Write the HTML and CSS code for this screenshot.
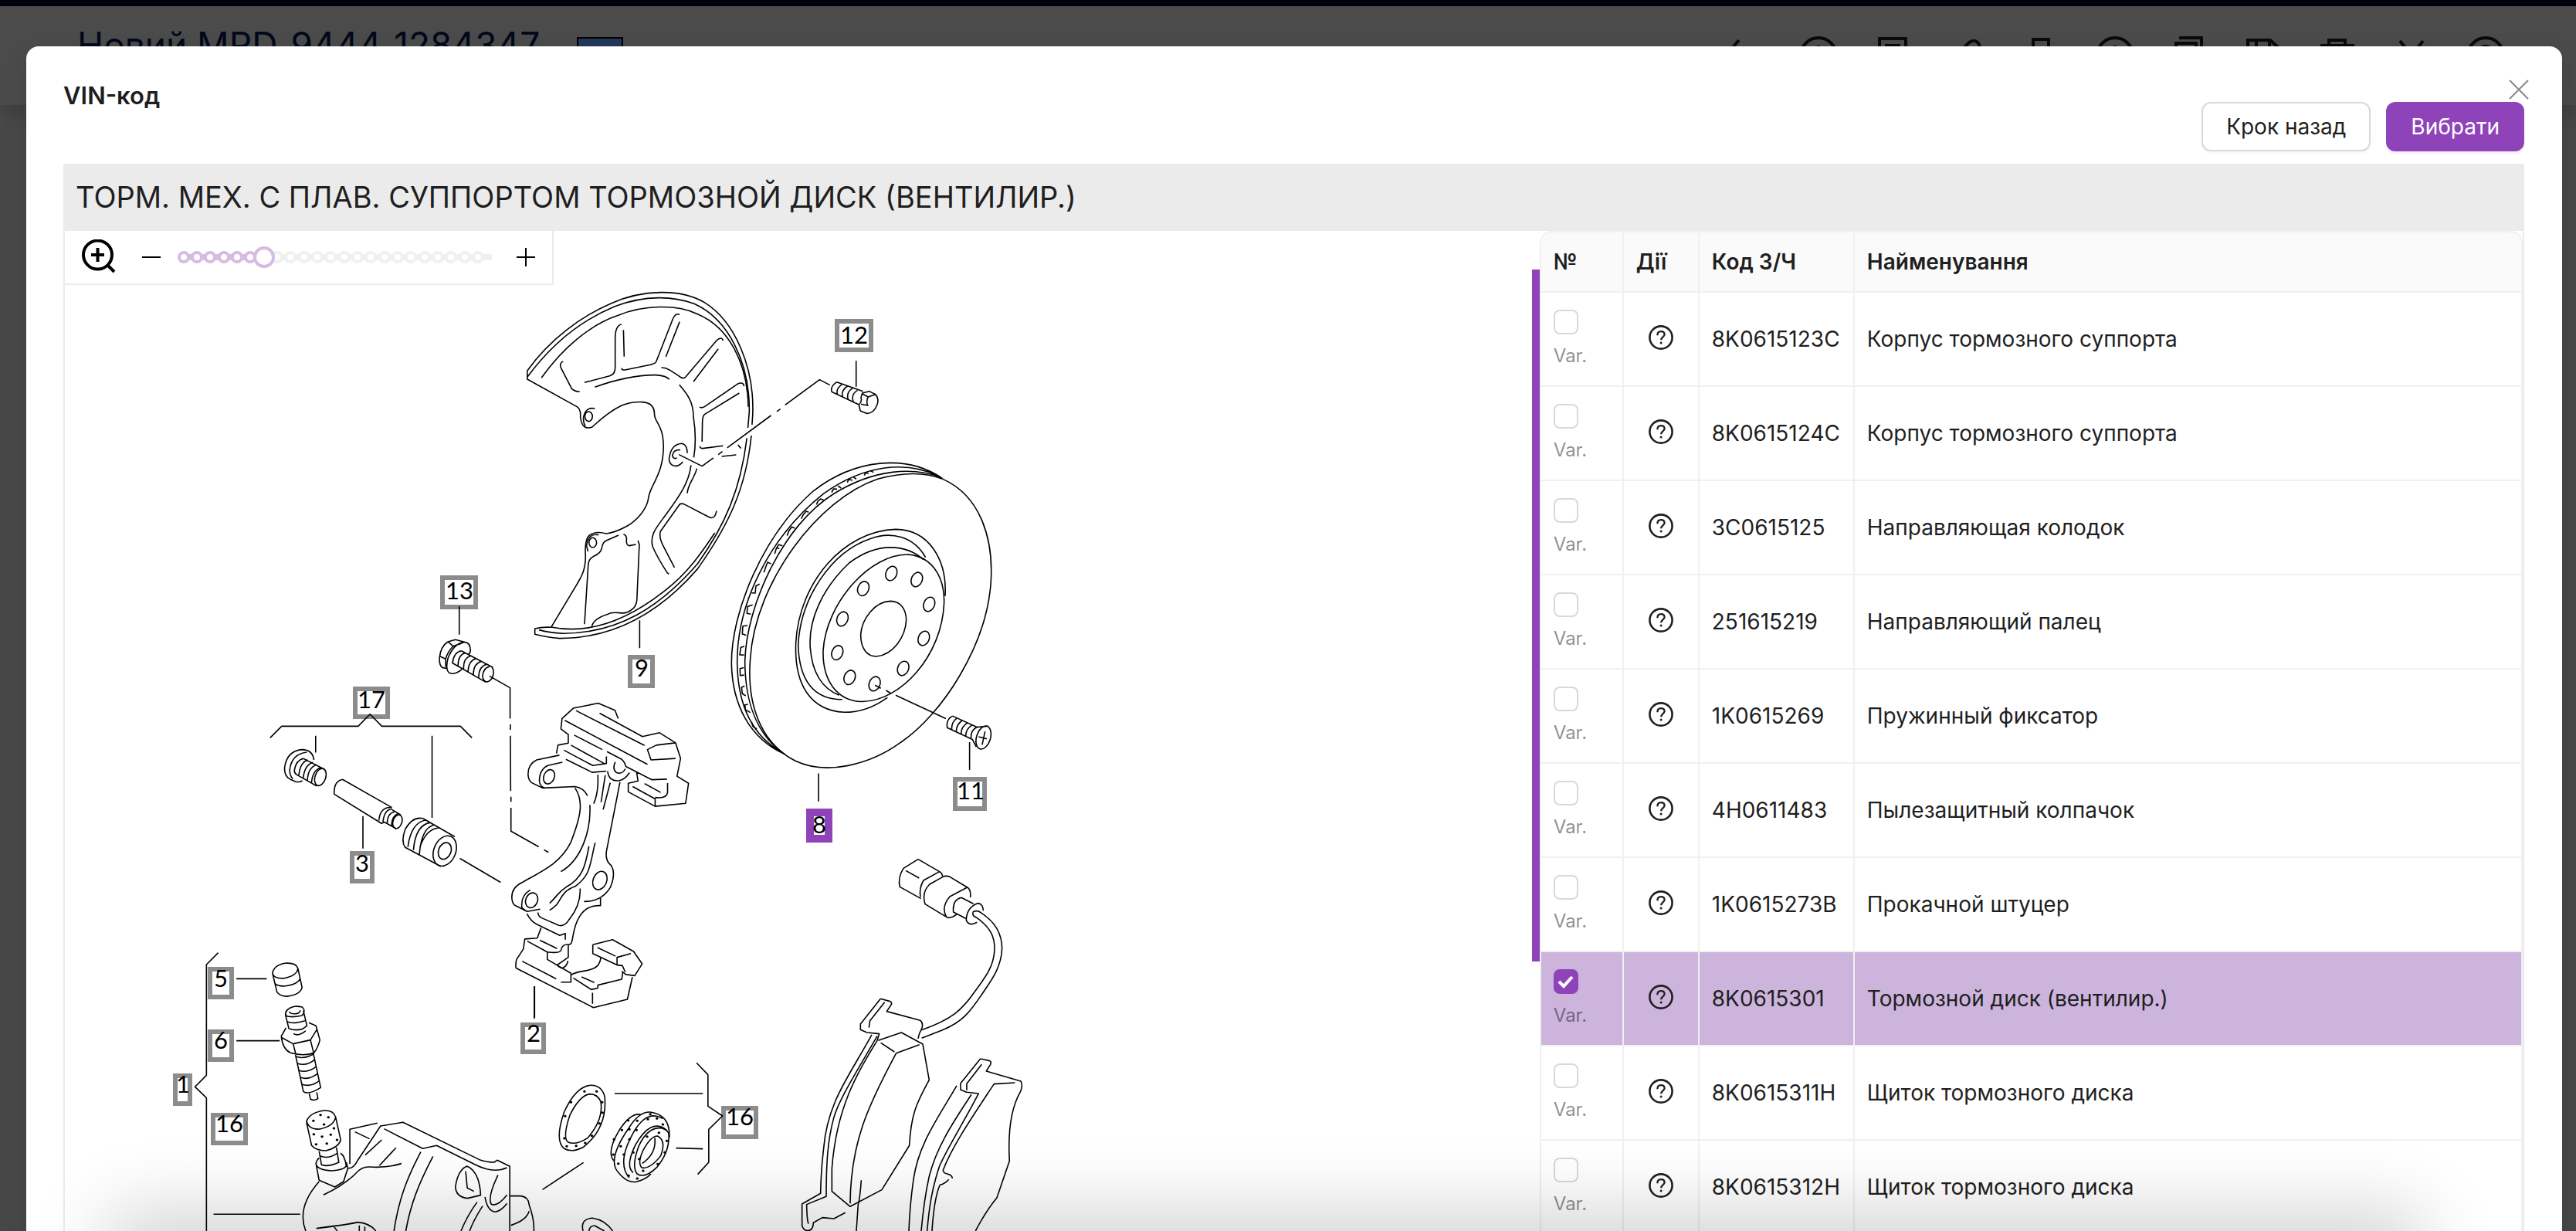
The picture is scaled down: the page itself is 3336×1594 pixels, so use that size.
FILE: index.html
```html
<!DOCTYPE html>
<html lang="uk">
<head>
<meta charset="utf-8">
<title>VIN-код</title>
<link rel="stylesheet" href="styles.css">
</head>
<body>
<svg class="defs" aria-hidden="true">
  <symbol id="help" viewBox="0 0 32 32"><circle cx="16" cy="16" r="14.6" fill="none" stroke="currentColor" stroke-width="2.6"/><path d="M11.4 13.2C11.4 9.600 13.400 8.200 16 8.200C18.800 8.200 20.600 9.900 20.600 12.200C20.600 15 16.200 15.300 16.200 19.200" fill="none" stroke="currentColor" stroke-width="2.300"/><circle cx="16.100" cy="23" r="1.500" fill="currentColor"/></symbol>
</svg>
<div class="app">
  <div class="topbar"></div>
  <header class="page-head">
    <h1 class="page-title">Новий MRD_9444_1284347</h1>
    <span class="flag"></span>
    <div class="tools">
      <svg viewBox="0 0 56 56"><path d="M21 8L4 28L21 48"/></svg>
      <svg viewBox="0 0 56 56"><circle cx="28" cy="28" r="23"/><path d="M28 15V41"/></svg>
      <svg viewBox="0 0 56 56"><path d="M11 6H45V50H11ZM18 15H38"/></svg>
      <svg viewBox="0 0 56 56"><path d="M22 20L31 11Q38 6 43 12Q48 20 40 27L26 41"/></svg>
      <svg viewBox="0 0 56 56"><path d="M18 7H38V49H18Z"/></svg>
      <svg viewBox="0 0 56 56"><circle cx="28" cy="28" r="23"/><path d="M28 15V30L36 36"/></svg>
      <svg viewBox="0 0 56 56"><path d="M15 5H44V44M11 12H37V50H11Z"/></svg>
      <svg viewBox="0 0 56 56"><path d="M8 8H37L49 19V48H8ZM19 8V20H36V8"/></svg>
      <svg viewBox="0 0 56 56"><path d="M17 16V8H38V16M8 15H48V46H8Z"/></svg>
      <svg viewBox="0 0 56 56"><path d="M13 9L43 47M43 9L13 47"/></svg>
      <svg viewBox="0 0 56 56"><circle cx="28" cy="28" r="23"/><path d="M20 22Q22 16 28 16Q34 16 35 22Q35 27 28 30V35"/></svg>
    </div>
  </header>
  <div class="page-body"></div>
</div>

<div class="mask">
  <section class="modal" role="dialog" aria-labelledby="dlg-title">
    <h2 class="modal-title" id="dlg-title">VIN-код</h2>
    <button class="close" type="button" aria-label="Закрити"><svg viewBox="0 0 24 24"><path d="M1 1L23 23M23 1L1 23"/></svg></button>
    <div class="actions">
      <button class="btn" type="button">Крок назад</button>
      <button class="btn btn-primary" type="button">Вибрати</button>
    </div>
    <h3 class="group-title">ТОРМ. МЕХ. С ПЛАВ. СУППОРТОМ ТОРМОЗНОЙ ДИСК (ВЕНТИЛИР.)</h3>
    <div class="panes">
      <div class="pane-left">
        <div class="zoombar">
          <svg class="zoom-icon" viewBox="0 0 46 46"><circle cx="20.500" cy="20" r="18.500"/><path d="M12 20H29M20.500 11V29M33 33L42 42"/></svg>
          <svg class="sign" viewBox="0 0 24 24"><path d="M0 12H24"/></svg>
          <div class="slider">
            <svg viewBox="0 0 410 32" id="dots">
              <path class="rail" d="M10 16H410"/><path class="rail-on" d="M10 16H116"/>
              <g class="dots-off"><circle cx="132" cy="16" r="6"/><circle cx="149" cy="16" r="6"/><circle cx="167" cy="16" r="6"/><circle cx="184" cy="16" r="6"/><circle cx="201" cy="16" r="6"/><circle cx="219" cy="16" r="6"/><circle cx="236" cy="16" r="6"/><circle cx="253" cy="16" r="6"/><circle cx="271" cy="16" r="6"/><circle cx="288" cy="16" r="6"/><circle cx="305" cy="16" r="6"/><circle cx="323" cy="16" r="6"/><circle cx="340" cy="16" r="6"/><circle cx="357" cy="16" r="6"/><circle cx="375" cy="16" r="6"/><circle cx="392" cy="16" r="6"/></g>
              <g class="dots-on"><circle cx="11" cy="16" r="6"/><circle cx="28" cy="16" r="6"/><circle cx="45" cy="16" r="6"/><circle cx="63" cy="16" r="6"/><circle cx="80" cy="16" r="6"/><circle cx="97" cy="16" r="6"/></g>
            </svg>
            <input type="range" min="0" max="22" value="6" aria-label="Масштаб">
          </div>
          <svg class="sign" viewBox="0 0 24 24"><path d="M0 12H24M12 0V24"/></svg>
        </div>
        <svg class="scheme" viewBox="84 299 1900 1295" role="img" aria-label="Схема тормозного механизма">
          <g class="spots">
            <rect x="1084" y="416" width="44" height="37"/><rect x="1237" y="1009" width="38" height="38"/><rect x="573" y="748" width="43" height="38"/><rect x="460" y="892" width="42" height="36"/><rect x="816" y="851" width="29" height="37"/><rect x="456" y="1105" width="26" height="36"/><rect x="272" y="1255" width="28" height="36"/><rect x="272" y="1336" width="28" height="36"/><rect x="227" y="1393" width="19" height="36"/><rect x="276" y="1444" width="42" height="36"/><rect x="677" y="1327" width="27" height="35"/><rect x="937" y="1435" width="42" height="37"/>
            <rect class="spot-on" x="1049" y="1052" width="24" height="34"/>
          </g>
          <g class="nums">
            <text x="1106" y="445">12</text><text x="1257" y="1035">11</text><text x="595" y="776">13</text><text x="481" y="917">17</text><text x="831" y="876">9</text><text x="469" y="1129">3</text><text x="286" y="1278">5</text><text x="286" y="1358">6</text><text x="237" y="1415">1</text><text x="297" y="1466">16</text><text x="691" y="1349">2</text><text x="958" y="1457">16</text><text x="1061" y="1079">8</text>
          </g>
          <!-- 9: dust shield, 12: bolt -->
          <g class="ln" transform="translate(640 360) scale(.4464 .3333)">
            <path d="M96 360C160 240 250 150 340 98C430 45 540 40 610 95C700 170 755 350 750 530L748 570M746 612C730 820 680 960 590 1130C480 1300 350 1400 190 1400Q150 1396 118 1384V1362Q140 1355 165 1357L240 1190C250 1165 265 1140 265 1080Q262 1030 272 1005Q290 980 325 993Q350 990 385 964C410 945 445 900 448 850C455 800 492 760 491 650C490 570 465 560 465 530Q465 485 430 482Q400 480 370 495C330 520 300 560 285 578Q255 595 250 540Q252 510 240 500L96 393V360"/>
            <path d="M96 385C170 250 260 160 350 110C440 65 520 70 580 100C680 160 742 330 740 520L736 582M733 622C715 820 670 960 590 1110C480 1280 360 1380 200 1381Q160 1378 130 1367"/>
            <path d="M137 388C200 270 280 180 360 145C430 105 530 100 590 140C680 190 735 330 737 500M165 1356C260 1382 370 1345 490 1220C560 1150 600 1070 640 990"/>
            <path d="M200 324Q188 330 194 350L225 430Q235 442 248 441M262 406L335 380Q350 375 351 350V230Q352 185 369 180M375 202L377 305M538 142Q525 135 518 160L470 325Q465 335 445 339L380 357Q368 358 371 350M538 170L498 306M664 243Q660 225 645 243L555 385Q548 395 535 380L510 358Q498 348 485 348M650 275L578 403M725 420Q722 403 708 410L610 500Q600 507 596 500M711 447L610 530Q604 538 604 560L603 636M292 424C350 395 420 375 470 377Q500 380 508 394M537 415C560 450 578 480 578 540C585 600 585 650 579 697M664 652L605 662Q597 662 597 653M707 648L716 662M702 687L660 693M571 727C565 800 530 860 495 925C470 970 450 1000 460 1045Q475 1090 502 1145L507 1150M588 740C580 780 562 800 560 836M523 1125L490 1040Q478 1010 482 985L535 885Q540 873 550 878L625 930Q640 938 645 905"/>
            <ellipse cx="274" cy="538" rx="11" ry="19"/><path d="M292 507Q265 500 259 540Q258 565 265 575"/>
            <ellipse cx="286" cy="1028" rx="11" ry="19"/><path d="M303 998Q272 990 268 1040L272 1062"/>
            <path d="M361 999L325 1020Q315 1025 312 1050Q308 1070 290 1080Q275 1090 273 1110L262 1345M375 995Q385 1000 384 1015Q382 1038 392 1040L411 1035M417 1020L421 1035L414 1250Q412 1275 402 1285Q385 1305 365 1301Q340 1297 330 1306Q285 1325 283 1357"/>
            <path d="M547 714Q535 735 520 729Q503 720 509 690Q516 645 545 643Q560 648 560 680M540 668Q520 665 517 690Q520 705 530 699M536 686L603 731L636 699M650 686L662 674M676 660L803 534M820 519L830 509M844 493L944 395L974 416"/>
            <path d="M994 404Q975 420 979 442M994 404L1070 440M979 442L1058 492M1010 412Q990 430 996 453M1025 420Q1005 438 1011 462M1040 428Q1020 445 1027 472M1054 436Q1034 452 1042 481M1068 447L1088 440L1106 452Q1118 470 1110 495Q1100 528 1080 526L1062 516L1058 492Q1068 480 1064 465ZM1068 450L1085 462L1106 452M1085 462Q1078 480 1084 495L1064 490"/>
            <path class="lead" d="M1050 322V422M422 1330V1438"/>
          </g>
          <!-- 8: disc, 11: screw -->
          <g class="ln" transform="translate(920 560) scale(.3333 .3444)">
            <path d="M905 176C1050 240 1100 400 1090 560C1075 800 900 1060 740 1165C620 1250 450 1290 330 1235C200 1170 140 1030 155 850C175 560 420 250 650 175Q800 135 905 176"/>
            <path d="M900 172C760 80 560 100 400 220C200 390 80 680 82 870C85 1020 150 1150 290 1210M890 165C760 105 600 120 440 230C220 400 105 650 104 860C105 1020 160 1140 280 1203M895 168C790 130 640 135 480 230C280 350 140 650 134 860C135 1020 180 1130 275 1200"/>
            <path d="M598 162L602 152L615 153M622 144L634 150M532 188L537 176L552 180M556 168L567 175M471 225L479 212L492 213M496 201L508 209M412 271L418 258L428 250L440 254M353 324L361 309L372 296L382 300M298 388L305 370L316 355L328 360M250 456L256 436L265 422L280 426M258 434L268 437M208 526L214 508L222 488L236 494M160 603L174 604L177 577L191 570M157 683L142 680L144 655L164 648M139 762L124 758L126 728L144 726M131 837L114 836L118 808L132 804M131 912L116 914L115 888L130 884M137 990L124 982L121 958L133 953M155 1053L136 1042L134 1024L146 1022M180 1115L165 1105L160 1088"/>
            <path d="M912 615C920 480 850 365 720 364C520 370 345 560 332 790C325 950 390 1045 520 1052Q610 1052 688 996M836 470C790 390 700 370 620 400C470 450 350 620 341 800C345 930 400 1005 512 1004M828 478C760 420 650 410 540 490C430 590 380 710 388 810C395 900 430 960 500 988"/>
            <path d="M770 459C620 455 450 640 438 820C435 930 490 1010 590 1012C740 1010 900 840 908 640C910 530 850 465 770 459Z"/>
            <path d="M700 634C640 635 588 700 584 760C584 815 610 842 645 842C710 835 758 770 761 705C760 660 735 634 700 634Z"/>
            <g class="holes"><ellipse cx="703" cy="530" rx="21" ry="28" transform="rotate(25 703 530)"/><ellipse cx="802" cy="553" rx="21" ry="28" transform="rotate(25 802 553)"/><ellipse cx="850" cy="646" rx="21" ry="28" transform="rotate(25 850 646)"/><ellipse cx="829" cy="774" rx="21" ry="28" transform="rotate(25 829 774)"/><ellipse cx="749" cy="887" rx="21" ry="28" transform="rotate(25 749 887)"/><ellipse cx="638" cy="945" rx="21" ry="28" transform="rotate(25 638 945)"/><ellipse cx="541" cy="921" rx="21" ry="28" transform="rotate(25 541 921)"/><ellipse cx="493" cy="828" rx="21" ry="28" transform="rotate(25 493 828)"/><ellipse cx="513" cy="701" rx="21" ry="28" transform="rotate(25 513 701)"/><ellipse cx="594" cy="587" rx="21" ry="28" transform="rotate(25 594 587)"/></g>
            <path d="M640 950L662 962M682 970L700 980M720 988L915 1076"/>
            <path d="M941 1066Q915 1078 920 1110L1018 1154L1033 1182M941 1066L1035 1108L1080 1104M958 1074Q935 1090 938 1118M978 1083Q953 1100 956 1127M998 1092Q971 1110 975 1135M1016 1100Q989 1118 993 1144M1036 1108Q1010 1120 1013 1150"/><ellipse cx="1061" cy="1147" rx="27" ry="45" transform="rotate(18 1061 1147)"/><path d="M1042 1144L1074 1152M1067 1124L1056 1174"/>
            <path class="lead" d="M420 1282V1387M1007 1164V1269"/>
          </g>
          <!-- 2: bracket, 3 and 17: guide pin set, 13: bolt -->
          <g class="ln" transform="translate(320 720) scale(.38265)">
            <path d="M718 170V266M705 283L680 290Q655 305 651 345Q650 372 662 378L675 380M705 283L735 291L715 300M680 290L697 305L712 300M697 305Q678 325 672 348L652 339M672 348V375M735 291Q756 292 756 320Q755 330 748 334M735 291Q700 295 680 345Q668 395 692 398Q710 398 727 383"/>
            <path d="M725 321Q700 325 695 362L808 427M725 321L832 377M738 328Q713 335 714 373M757 338Q730 345 733 385M775 347Q748 355 748 393M793 356Q765 365 766 402M811 366Q783 375 784 411M820 374Q800 378 797 405Q798 425 813 426Q832 420 834 395Q834 380 828 377M820 406L890 446V550M891 570V588M891 608L892 795M893 815V832M893 852V931L987 984M1005 994L1020 1003"/>
            <path class="lead" d="M78 615L117 576H376L416 535L456 576H722L761 615M232 608V665M626 608V886M392 880V990M973 1456V1562"/>
            <path d="M226 690Q222 655 185 655Q135 660 127 715Q125 745 145 755L165 764Q180 766 187 760M202 664Q150 670 144 725Q145 745 155 754M190 685Q165 692 160 725Q160 735 168 740L235 778M190 685L262 722M205 690Q178 700 175 745M222 698Q193 710 190 753M236 706Q205 715 204 762M250 716Q220 725 218 770"/><ellipse cx="248" cy="748" rx="18" ry="30" transform="rotate(18 248 748)"/>
            <path d="M323 756Q292 762 295 806L455 905L466 900M323 756L490 851M490 851Q450 848 446 895M490 856Q465 858 460 898L504 922M490 858L520 876M498 866Q475 870 474 905M510 872Q490 880 489 912"/><ellipse cx="509" cy="899" rx="15" ry="24" transform="rotate(18 509 899)"/>
            <path d="M595 888Q560 880 535 925Q520 965 535 986L655 1050M595 888L703 950M607 893Q555 900 544 985M620 902Q570 910 563 995M632 910Q590 920 583 1010M648 920Q605 925 585 985"/><ellipse cx="669" cy="998" rx="37" ry="53" transform="rotate(22 669 998)"/><ellipse cx="669" cy="998" rx="21" ry="29" transform="rotate(22 669 998)"/><path d="M720 1023L858 1104"/>
            <path d="M1256 550L1245 522L1188 498L1104 515L1066 550L1062 585L1087 604V633L1052 640L1047 668M1188 498M1193 532L1338 611L1396 598L1450 632L1467 685L1455 745L1494 769L1484 837L1381 847L1290 798V769L1323 761L1318 730M1113 523L1345 641M1075 556L1355 705M1107 606L1202 655M1096 640L1212 704M1072 657L1170 709L1216 702V678M1218 662L1268 688Q1277 695 1282 712L1370 757L1421 755M1338 611M1450 632L1385 640L1355 655L1367 690L1450 685M1079 688L1168 732L1216 728M1381 847V822L1305 780M1381 817Q1420 822 1423 800V768M1345 770L1400 800"/>
            <path d="M1057 674L980 690Q950 705 951 740Q952 760 965 768L1000 785L1110 780Q1140 785 1152 811M1067 698L1020 708Q990 720 989 760Q990 778 1005 784M1110 785C1140 830 1130 880 1095 970C1060 1040 1000 1065 930 1105Q890 1125 897 1165Q900 1180 910 1184L948 1203L992 1195"/><ellipse cx="1022" cy="747" rx="18" ry="25" transform="rotate(22 1022 747)"/><ellipse cx="963" cy="1165" rx="20" ry="26" transform="rotate(22 963 1165)"/><ellipse cx="1194" cy="1098" rx="23" ry="32" transform="rotate(22 1194 1098)"/>
            <path d="M958 1130Q925 1150 930 1190L942 1200M1160 842C1165 930 1130 1030 1062 1068M1187 740Q1190 800 1173 838M1212 742L1198 833M1229 767L1205 858M1262 765L1216 1000Q1212 1030 1230 1045Q1250 1070 1230 1120Q1200 1170 1140 1169M1220 728Q1225 765 1260 760Q1280 755 1294 733M1246 697Q1235 720 1250 733Q1270 740 1280 720M1178 970C1160 1040 1165 1080 1110 1118C1050 1140 1070 1175 1024 1198M1157 982C1145 1050 1135 1090 1080 1120C1050 1140 1055 1145 1024 1175M1127 1125Q1130 1180 1090 1230Q1075 1255 1055 1250L1000 1226Q985 1220 984 1206M1196 1158V1183Q1150 1180 1125 1220C1100 1260 1105 1300 1096 1312L1087 1316V1358L1048 1385M947 1210Q960 1235 980 1246L1058 1284L1077 1277V1298M995 1258L982 1293L940 1296L935 1330L912 1365Q908 1380 910 1394L1172 1528L1287 1500L1304 1425M948 1303L1016 1340Q1055 1345 1062 1335Q1065 1315 1085 1314M1016 1340V1365L1096 1412V1442H1062M991 1300L1049 1328M931 1371L1046 1431M1052 1388L1065 1395Q1082 1390 1086 1370M1096 1418C1130 1395 1190 1415 1197 1360M1104 1428L1165 1467L1187 1462V1452L1268 1432L1272 1406M1169 1478V1515M1132 1424L1175 1443M1170 1315L1237 1298L1308 1338L1337 1380L1312 1420L1282 1416L1268 1405M1170 1315V1345L1252 1384L1270 1386L1280 1408M1252 1384V1358L1299 1345M1186 1325L1247 1354"/>
            <path d="M128 1378Q90 1385 86 1412Q90 1430 125 1429Q170 1420 172 1395Q165 1375 128 1378ZM86 1412L101 1475Q110 1490 135 1490Q180 1485 186 1460L172 1395M94 1447Q105 1457 130 1455Q170 1450 180 1430"/>
          </g>
          <!-- 1, 5, 6, 16: bleeder, caliper body, seals -->
          <g class="ln" transform="translate(200 1200) scale(.5102 .3333)">
            <path class="lead" d="M162 101L132 147V577L103 622L132 665V1182M208 202H285M208 443H318M964 231V357M1376 529L1405 575V697L1442 735L1407 787V915L1379 962M1168 648H1392M1324 860L1392 863M150 1117H370"/>
            <path d="M355 310Q330 320 333 345Q345 355 375 345Q385 325 375 312Q365 308 355 310M333 345L341 395Q355 405 375 398L387 385L378 325M342 330Q345 340 360 338Q370 335 370 325M336 368Q350 380 382 365M392 373L410 385L420 440Q415 470 405 490Q380 505 345 490Q325 475 322 425L334 393M412 400L396 440L352 455L322 430M396 440L404 490M352 455L359 496M353 415Q365 428 384 405M358 498L378 640Q390 655 422 625L403 490M360 505Q380 515 403 495M362 530Q385 545 408 515M366 558Q390 570 411 543M370 585Q392 598 415 570M374 612Q395 625 419 598M393 648L396 670Q405 678 415 668L412 643"/>
            <path d="M430 714Q395 722 386 755Q392 790 420 786Q455 775 460 740Q455 712 430 714ZM386 760L399 850Q410 870 435 870Q465 860 473 830L460 740M418 872L424 925Q440 935 468 915L462 858M420 890Q440 905 464 880M472 880Q483 888 487 930Q480 945 450 948Q412 945 410 920Q412 905 418 898M410 920L418 985L458 1011L480 990L491 938L487 915"/>
            <path d="M496 922V787L566 763M509 797L546 824M491 938Q505 940 515 910L574 774L631 760L825 905Q845 915 862 915L870 907L902 931V1182M583 785L681 862L716 850L815 925Q860 960 895 936M429 1042Q480 1005 510 960Q525 932 545 933Q590 938 627 920M577 828L535 887M613 859L571 928M676 875C640 980 620 1060 608 1182M707 892C670 1000 650 1080 638 1182M418 990Q360 1090 384 1182M411 1172Q500 1155 515 1148Q545 1150 562 1182M456 1166L464 1182M520 1160V1182M534 1165V1182"/>
            <path d="M793 930Q770 945 764 1010Q765 1050 795 1055L828 1043Q825 950 793 930ZM790 950L794 1015L811 1028M872 965Q845 1050 855 1078Q870 1090 895 1042M839 1050Q845 1105 865 1108Q880 1105 895 1075M819 1070Q795 1120 778 1182M833 1085Q810 1140 800 1182M902 1046H930Q950 1050 951 1080Q965 1140 963 1182M951 1105Q945 1140 905 1160M985 1021L1089 916"/>
            <path d="M1088 1182Q1080 1135 1112 1132Q1145 1140 1163 1182M1103 1182Q1105 1160 1118 1162L1142 1182"/>
            <path d="M1107 616Q1070 620 1040 720Q1015 830 1040 862Q1060 880 1090 855Q1150 780 1143 660Q1135 615 1107 616ZM1105 650Q1080 655 1055 730Q1035 820 1050 837Q1070 850 1100 820Q1140 750 1133 680Q1125 650 1105 650Z"/>
            <path d="M1235 730Q1210 720 1180 790Q1145 880 1168 912M1258 720Q1230 718 1205 780Q1150 900 1175 950Q1200 1000 1225 990Q1250 980 1260 960M1258 720Q1310 730 1307 820M1290 745Q1240 700 1200 850Q1180 930 1205 975M1300 790Q1260 740 1220 850Q1195 930 1215 955"/>
            <path d="M1280 782Q1250 785 1230 850Q1210 930 1225 960Q1245 980 1275 935Q1310 870 1305 800Q1295 780 1280 782ZM1277 813Q1260 812 1240 870Q1225 920 1238 937Q1260 940 1285 890Q1300 830 1277 813ZM1270 820Q1275 880 1238 920"/>
            <path class="specks" d="M403 754h1M421 731h1M430 768h1M441 740h1M404 806h1M425 815h1M447 808h1M455 783h1M410 845h1M437 842h1M463 828h1M1091 640h1M1122 640h1M1057 682h1M1136 682h1M1042 736h1M1137 722h1M1129 764h1M1040 822h1M1110 812h1M1046 853h1M1070 851h1M1093 840h1M1202 752h1M1225 754h1M1258 728h1M1186 790h1M1205 787h1M1252 748h1M1275 745h1M1166 826h1M1205 826h1M1223 790h1M1183 853h1M1290 768h1M1280 800h1M1250 815h1M1164 885h1M1191 885h1M1215 877h1M1295 877h1M1177 920h1M1240 948h1M1203 967h1M1225 978h1M1277 922h1M1300 832h1M1230 902h1"/>
          </g>
          <!-- pads and wear sensor lead -->
          <g class="ln" transform="translate(1000 1080) scale(.3333)">
            <path d="M567 98L510 133Q487 170 496 205L578 251M567 98L650 146Q660 150 662 164M650 146L588 180Q570 210 576 245M519 142L571 171"/>
            <path d="M662 167L612 195Q580 225 594 272L682 325Q700 326 717 312M662 167Q675 160 690 166L758 207Q773 215 770 246M758 207L690 243Q655 285 677 322M735 247Q700 255 704 303L752 328M735 247L782 271M820 298Q820 270 798 269Q755 285 754 335Q765 360 796 343"/>
            <path d="M795 325Q775 318 781 302Q790 297 802 300C870 340 893 390 893 445C890 520 850 570 820 615C770 690 740 730 660 762L581 793M795 325C850 365 865 400 864 450C860 520 825 560 785 615C740 680 700 720 580 761"/>
            <path d="M421 640L343 738V760L368 771L416 776L408 802C330 930 250 1060 232 1300V1388L303 1447L426 1382L533 1210C540 1080 565 1040 610 955L585 816L502 771L412 802M421 640L458 650Q470 655 458 670L445 689L575 724Q590 735 580 758Q570 775 567 795M437 653L380 725L376 752M422 811L475 846M572 818L482 851C370 1060 305 1200 303 1435M387 780C300 940 215 1040 200 1220Q190 1300 188 1396L116 1437V1520Q120 1540 138 1541Q160 1540 160 1510L195 1490L240 1494L284 1471M408 785C330 920 260 1030 240 1100C215 1190 210 1280 210 1408L134 1439Q135 1500 141 1514M346 1345Q342 1410 334 1440L327 1542"/>
            <path d="M809 873L732 968V993L755 1003L802 1008C750 1110 680 1220 650 1290C620 1380 610 1450 602 1542M809 873L845 881Q853 885 848 895L832 921L966 960Q975 975 965 1000C930 1060 915 1150 922 1270L873 1413Q830 1465 790 1542M814 895L756 970V995M943 966L862 971C790 1080 700 1210 664 1306Q665 1318 680 1320Q700 1325 700 1338M686 1342Q670 1360 652 1363C635 1400 625 1480 621 1542M717 978C640 1110 565 1210 548 1350Q535 1440 531 1542M774 1012C710 1110 640 1210 610 1330Q590 1420 579 1542"/>
          </g>
        </svg>
        <div class="splitter"></div>
      </div>
      <div class="pane-right">
        <table class="parts">
          <colgroup><col class="c-num"><col class="c-act"><col class="c-code"><col></colgroup>
          <thead><tr><th>№</th><th>Дії</th><th>Код З/Ч</th><th>Найменування</th></tr></thead>
          <tbody>
            <tr><td><label class="pick"><input type="checkbox"><span>Var.</span></label></td><td class="act"><svg><use href="#help"/></svg></td><td>8K0615123C</td><td>Корпус тормозного суппорта</td></tr>
            <tr><td><label class="pick"><input type="checkbox"><span>Var.</span></label></td><td class="act"><svg><use href="#help"/></svg></td><td>8K0615124C</td><td>Корпус тормозного суппорта</td></tr>
            <tr><td><label class="pick"><input type="checkbox"><span>Var.</span></label></td><td class="act"><svg><use href="#help"/></svg></td><td>3C0615125</td><td>Направляющая колодок</td></tr>
            <tr><td><label class="pick"><input type="checkbox"><span>Var.</span></label></td><td class="act"><svg><use href="#help"/></svg></td><td>251615219</td><td>Направляющий палец</td></tr>
            <tr><td><label class="pick"><input type="checkbox"><span>Var.</span></label></td><td class="act"><svg><use href="#help"/></svg></td><td>1K0615269</td><td>Пружинный фиксатор</td></tr>
            <tr><td><label class="pick"><input type="checkbox"><span>Var.</span></label></td><td class="act"><svg><use href="#help"/></svg></td><td>4H0611483</td><td>Пылезащитный колпачок</td></tr>
            <tr><td><label class="pick"><input type="checkbox"><span>Var.</span></label></td><td class="act"><svg><use href="#help"/></svg></td><td>1K0615273B</td><td>Прокачной штуцер</td></tr>
            <tr class="selected"><td><label class="pick"><input type="checkbox" checked><span>Var.</span></label></td><td class="act"><svg><use href="#help"/></svg></td><td>8K0615301</td><td>Тормозной диск (вентилир.)</td></tr>
            <tr><td><label class="pick"><input type="checkbox"><span>Var.</span></label></td><td class="act"><svg><use href="#help"/></svg></td><td>8K0615311H</td><td>Щиток тормозного диска</td></tr>
            <tr><td><label class="pick"><input type="checkbox"><span>Var.</span></label></td><td class="act"><svg><use href="#help"/></svg></td><td>8K0615312H</td><td>Щиток тормозного диска</td></tr>
          </tbody>
        </table>
      </div>
    </div>
  </section>
</div>
<div class="dock-shade"></div>
</body>
</html>
```
FILE: styles.css
```css
* { box-sizing: border-box; }
html { overflow: hidden; }
body {
  margin: 0;
  height: 100vh;
  overflow: hidden;
  position: relative;
  background: #484848;
  color: #1f1f1f;
  font: 28px/44px Inter, "Noto Sans", sans-serif;
}
h1, h2, h3 { margin: 0; }
button, input { font: inherit; margin: 0; }
svg { display: block; fill: none; }
.defs { position: absolute; width: 0; height: 0; }

/* dimmed page behind the dialog */
.topbar { height: 8px; background: #01040f; }
.page-head {
  display: flex;
  align-items: center;
  height: 128px;
  padding: 0 89px 0 100px;
  background: #4b4b4b;
  box-shadow: 0 8px 24px rgba(0, 0, 0, .15);
}
.page-title { color: #03081a; font-size: 46px; font-weight: 400; line-height: 100px; align-self: flex-start; }
.flag { align-self: flex-start; margin: 40px 0 0 48px; width: 60px; height: 40px; border: 2px solid #000; background: #22385a; }
.tools { display: flex; gap: 40px; margin-left: auto; }
.tools svg { width: 56px; height: 56px; stroke: #0a0a0a; stroke-width: 4; }

.mask { position: absolute; inset: 0; overflow: hidden; padding: 60px 18px 0 34px; }
.modal {
  position: relative;
  padding: 40px 49px 48px 48px;
  border-radius: 16px;
  background: #fff;
  box-shadow: 0 12px 32px rgba(0, 0, 0, .12);
}
.modal-title { font-size: 31px; font-weight: 600; line-height: 48px; height: 32px; }
.close {
  position: absolute;
  top: 34px;
  right: 34px;
  padding: 9px;
  border: 0;
  background: none;
}
.close svg { width: 26px; height: 26px; stroke: #8c8c8c; stroke-width: 2; }
.actions { display: flex; justify-content: flex-end; gap: 20px; padding-bottom: 16px; }
.btn {
  height: 64px;
  padding: 0 30px;
  border: 2px solid #d9d9d9;
  border-radius: 12px;
  background: #fff;
  color: #1f1f1f;
  box-shadow: 0 4px 0 rgba(0, 0, 0, .02);
}
.btn-primary { border-color: #8f43b9; background: #8f43b9; color: #fff; box-shadow: 0 4px 0 #fbf0ff; }
.group-title {
  height: 87px;
  padding: 0 16px;
  background: #ebebeb;
  font-size: 38px;
  font-weight: 400;
  line-height: 87px;
  white-space: nowrap;
}
.panes { display: grid; grid-template-columns: 3fr 2fr; border: solid #ebebeb; border-width: 0 2px; }
.pane-left { position: relative; overflow: hidden; }
.scheme { width: 1900px; height: 1295px; }
.splitter { position: absolute; top: 50px; right: 0; width: 10px; height: 896px; background: #8f43b9; }

.zoombar {
  position: absolute;
  left: 0;
  top: 0;
  display: flex;
  align-items: center;
  height: 70px;
  padding: 0 22px;
  border: solid #ebebeb;
  border-width: 0 2px 2px 0;
  background: #fff;
}
.zoom-icon { width: 46px; height: 46px; stroke: #000; stroke-width: 4; }
.sign { width: 24px; height: 24px; margin: 0 0 0 32px; stroke: #000; stroke-width: 2; }
.slider { display: grid; align-items: center; width: 410px; height: 32px; margin-left: 19px; }
.slider + .sign { margin-left: 32px; }
.slider > * { grid-area: 1 / 1; }
.slider svg { width: 410px; height: 32px; overflow: visible; }
.rail { stroke: #f0f0f0; stroke-width: 8; }
.rail-on { stroke: #d6bbe2; stroke-width: 8; }
.dots-on circle, .dots-off circle { fill: #fff; stroke-width: 4; }
.dots-on circle { stroke: #d6bbe2; }
.dots-off circle { stroke: #f0f0f0; }
.slider input { appearance: none; width: 409px; height: 28px; margin-left: -3px; background: none; }
.slider input::-webkit-slider-thumb { appearance: none; width: 28px; height: 28px; border: 4px solid #d6bbe2; border-radius: 50%; background: #fff; }

.ln { stroke: #000; stroke-linejoin: round; }
.ln * { vector-effect: non-scaling-stroke; stroke-width: 1.6px; }
.ln .lead { stroke-width: 1.6px; }
.ln .specks { stroke-width: 3px; stroke-linecap: round; }
.spots rect { stroke: #8c8c8c; stroke-width: 6px; }
.spots .spot-on { stroke: #8f43b9; stroke-width: 10px; }
.nums text { fill: #000; font: 31px Lato, "Noto Sans", sans-serif; text-anchor: middle; }

.parts { width: 100%; table-layout: fixed; border-spacing: 0; border-left: 2px solid #f0f0f0; border-radius: 16px 16px 0 0; }
.c-num { width: 107px; }
.c-act { width: 98px; }
.c-code { width: 201px; }
.parts th, .parts td { padding: 0 16px; border: solid #f0f0f0; border-width: 0 2px 2px 0; text-align: left; white-space: nowrap; }
.parts th { height: 80px; border-top-width: 2px; background: #fafafa; font-weight: 600; }
.parts th:first-child { border-top-left-radius: 14px; }
.parts th:last-child { border-top-right-radius: 16px; }
.parts td { height: 122px; }
.selected td { background: #ccb4dc; }
.pick { display: grid; }
.pick input {
  appearance: none;
  width: 32px;
  height: 32px;
  margin: 6px 0;
  border: 2px solid #d9d9d9;
  border-radius: 8px;
  background: #fff;
}
.pick input:checked {
  border-color: #8f43b9;
  background: #8f43b9 url("data:image/svg+xml,%3Csvg xmlns='http://www.w3.org/2000/svg' viewBox='0 0 28 28'%3E%3Cpath d='M5 14L11 20L22 8' fill='none' stroke='%23fff' stroke-width='4'/%3E%3C/svg%3E");
}
.pick span { color: rgba(0, 0, 0, .45); font-size: 24px; }
.act svg { width: 32px; height: 32px; margin: 0 auto 4px; }

.dock-shade {
  position: absolute;
  left: 160px;
  right: 220px;
  bottom: -60px;
  height: 60px;
  box-shadow: 0 0 100px 20px rgba(0, 0, 0, .2);
}
```
